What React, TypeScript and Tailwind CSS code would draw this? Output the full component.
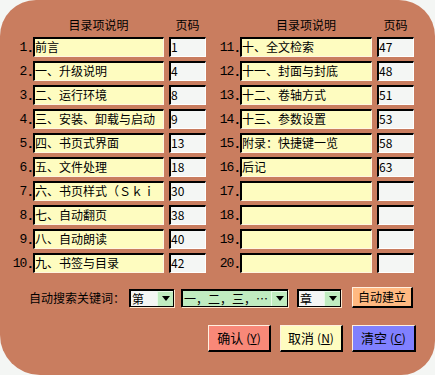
import React from 'react';

const leftItems: [string, string][] = [
  ['前言', '1'],
  ['一、升级说明', '4'],
  ['二、运行环境', '8'],
  ['三、安装、卸载与启动', '9'],
  ['四、书页式界面', '13'],
  ['五、文件处理', '18'],
  ['六、书页样式（Ｓｋｉ', '30'],
  ['七、自动翻页', '38'],
  ['八、自动朗读', '40'],
  ['九、书签与目录', '42'],
];

const rightItems: [string, string][] = [
  ['十、全文检索', '47'],
  ['十一、封面与封底', '48'],
  ['十二、卷轴方式', '51'],
  ['十三、参数设置', '53'],
  ['附录：快捷键一览', '58'],
  ['后记', '63'],
  ['', ''],
  ['', ''],
  ['', ''],
  ['', ''],
];

const font = { fontFamily: '"Noto Sans CJK SC", "Liberation Sans", sans-serif' };

function Row({ n, text, page, wide }: { n: number; text: string; page: string; wide?: boolean }) {
  return (
    <div className="flex h-[20px] items-stretch">
      <div className="flex w-[25px] items-center justify-end pr-[1px] text-[13px] leading-none text-black">
        <span className="font-['Liberation_Mono',monospace] tracking-[-1px]">{n}</span>
        <span className="ml-[2px] font-['Liberation_Sans',sans-serif] font-bold">.</span>
      </div>
      <div
        className={`${wide ? 'w-[132px]' : 'w-[131px]'} overflow-hidden whitespace-nowrap border-t-2 border-l-2 border-b border-r border-t-black border-l-black border-b-[#fff6e0] border-r-[#fff6e0] bg-[#fefcc0] text-[12px] leading-[16px] text-black`}
      >
        {text}
      </div>
      <div className="ml-[5px] w-[37px] overflow-hidden border-t-2 border-l-2 border-b border-r border-t-black border-l-black border-b-white border-r-white bg-[#f4f6f4] text-[12px] leading-[16px] text-black">
        {page}
      </div>
    </div>
  );
}

function Column({ items, start, wide }: { items: [string, string][]; start: number; wide?: boolean }) {
  return (
    <div className="flex flex-col">
      <div className="flex h-[18px] items-center text-[12px] text-black">
        <div className="w-[25px]" />
        <div className={`${wide ? 'w-[132px]' : 'w-[131px]'} text-center`}>目录项说明</div>
        <div className="ml-[5px] w-[37px] text-center">页码</div>
      </div>
      <div className="mt-[3px] flex flex-col gap-[4px]">
        {items.map(([t, p], i) => (
          <Row key={i} n={start + i} text={t} page={p} wide={wide} />
        ))}
      </div>
    </div>
  );
}

function Select({ value, width, green }: { value: string; width: string; green?: boolean }) {
  return (
    <div
      className={`${width} flex h-[18px] items-stretch border-t-2 border-l-2 border-b border-r border-black shadow-[1px_1px_0_#ffe6cc] ${green ? 'bg-[#c0ecc0]' : 'bg-[#f4f6f4]'}`}
    >
      <div className="flex-1 overflow-hidden whitespace-nowrap pl-[1px] text-[12px] leading-[15px] text-black">
        {value}
      </div>
      <div className="flex w-[16px] items-center justify-center border-l border-t border-[#e8fae8] bg-[#c0ecc0]">
        <svg width="8" height="5" viewBox="0 0 8 5">
          <path d="M0 0h8L4 5z" fill="#000" />
        </svg>
      </div>
    </div>
  );
}

function Button({ label, hot, bg, width }: { label: string; hot: string; bg: string; width: string }) {
  return (
    <button
      className={`${width} ${bg} flex h-[27px] items-center justify-center border-t border-l border-b-2 border-r-2 border-t-[#fff0e0] border-l-[#fff0e0] border-b-black border-r-black text-[13px] text-black`}
    >
      {label}
      <span className="ml-[3px] text-[12px]">
        (<span className="underline">{hot}</span>)
      </span>
    </button>
  );
}

export default function App() {
  return (
    <div className="h-[375px] w-[435px] bg-[#f4f6f4]" style={font}>
      <div className="flex h-full w-full flex-col rounded-tl-[36px] rounded-tr-[36px] rounded-bl-[40px] rounded-br-[34px] bg-[#c97d5f] pt-[16px]">
        <div className="flex pl-[8px]">
          <Column items={leftItems} start={1} />
          <div className="ml-[9px]">
            <Column items={rightItems} start={11} wide />
          </div>
        </div>

        <div className="mt-[14px] flex h-[21px] items-center pl-[29px]">
          <div className="w-[100px] text-[12px] text-black">自动搜索关键词：</div>
          <Select value="第" width="w-[45px]" />
          <div className="ml-[7px]">
            <Select value="一，二，三，…" width="w-[107px]" green />
          </div>
          <div className="ml-[9px]">
            <Select value="章" width="w-[44px]" />
          </div>
          <button className="ml-[11px] h-[21px] w-[61px] border-t border-l border-b-2 border-r-2 border-t-[#fff0e0] border-l-[#fff0e0] border-b-black border-r-black bg-[#ffb981] text-[12px] text-black">
            自动建立
          </button>
        </div>

        <div className="mt-[17px] flex justify-end gap-[9px] pr-[19px]">
          <Button label="确认" hot="Y" bg="bg-[#f88878]" width="w-[63px]" />
          <Button label="取消" hot="N" bg="bg-[#fefcc0]" width="w-[63px]" />
          <Button label="清空" hot="C" bg="bg-[#8080ff]" width="w-[64px]" />
        </div>
      </div>
    </div>
  );
}
